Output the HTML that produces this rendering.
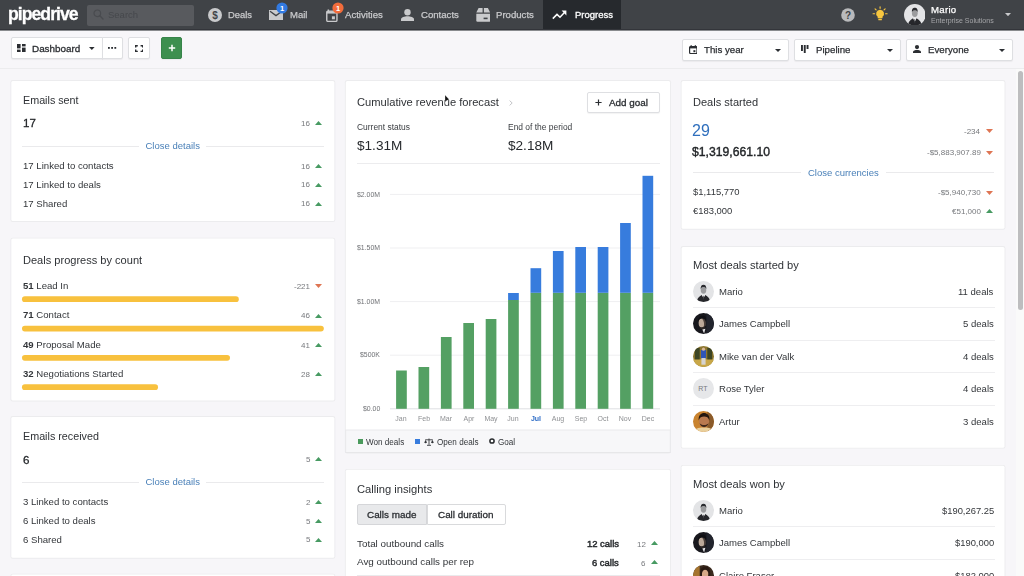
<!DOCTYPE html>
<html><head><meta charset="utf-8"><title>Pipedrive - Progress</title>
<style>
*{box-sizing:border-box;margin:0;padding:0}
html,body{width:1024px;height:576px;overflow:hidden}
body{position:relative;background:#f7f6f9;font-family:"Liberation Sans",sans-serif;color:#33363a}
.a{position:absolute;display:block}
.t{position:absolute;white-space:nowrap;line-height:1;will-change:transform}
.card{position:absolute;background:#fff;border:1px solid #efeff1;border-radius:2px}
.btn{position:absolute;background:#fff;border:1px solid #dedfe2;border-radius:2px;box-shadow:0 1px 1px rgba(0,0,0,.05)}
</style></head><body>

<svg class="a" style="left:0;top:0" width="1024" height="576" viewBox="0 0 1024 576"><rect x="10.40" y="80.00" width="324.90" height="142.00" rx="2.2" fill="#ececee"/><rect x="11.30" y="80.90" width="323.10" height="140.20" rx="1.5" fill="#fff"/><rect x="10.40" y="237.70" width="324.90" height="163.80" rx="2.2" fill="#ececee"/><rect x="11.30" y="238.60" width="323.10" height="162.00" rx="1.5" fill="#fff"/><rect x="10.40" y="416.10" width="324.90" height="142.60" rx="2.2" fill="#ececee"/><rect x="11.30" y="417.00" width="323.10" height="140.80" rx="1.5" fill="#fff"/><rect x="10.40" y="573.70" width="324.90" height="67.20" rx="2.2" fill="#ececee"/><rect x="11.30" y="574.60" width="323.10" height="65.40" rx="1.5" fill="#fff"/><rect x="344.90" y="80.00" width="326.10" height="373.50" rx="2.2" fill="#ececee"/><rect x="345.80" y="80.90" width="324.30" height="371.70" rx="1.5" fill="#fff"/><rect x="344.90" y="468.90" width="326.10" height="172.00" rx="2.2" fill="#ececee"/><rect x="345.80" y="469.80" width="324.30" height="170.20" rx="1.5" fill="#fff"/><rect x="680.70" y="80.00" width="324.70" height="149.70" rx="2.2" fill="#ececee"/><rect x="681.60" y="80.90" width="322.90" height="147.90" rx="1.5" fill="#fff"/><rect x="680.70" y="246.10" width="324.70" height="202.50" rx="2.2" fill="#ececee"/><rect x="681.60" y="247.00" width="322.90" height="200.70" rx="1.5" fill="#fff"/><rect x="680.70" y="464.90" width="324.70" height="176.00" rx="2.2" fill="#ececee"/><rect x="681.60" y="465.80" width="322.90" height="174.20" rx="1.5" fill="#fff"/><rect x="22" y="296.3" width="216.8" height="5.7" rx="2.85" fill="#f8c13e"/><rect x="22" y="325.7" width="301.8" height="5.7" rx="2.85" fill="#f8c13e"/><rect x="22" y="355" width="208" height="5.7" rx="2.85" fill="#f8c13e"/><rect x="22" y="384.3" width="136" height="5.7" rx="2.85" fill="#f8c13e"/></svg>
<div class="a" style="left:0px;top:0px;width:1024px;height:30px;background:#404347;border-bottom:1px solid #33353a;"></div>
<div class="a" style="left:0px;top:30px;width:1024px;height:1px;background:#898b8e;"></div>
<div class="t" style="left:8px;top:6px;font-size:17.6px;color:#fff;font-weight:bold;letter-spacing:-.95px;-webkit-text-stroke:.3px #fff;">pipedrive</div>
<div class="a" style="left:87px;top:4.5px;width:107px;height:21px;background:#585a5e;border-radius:2px;"></div>
<svg class="a" style="left:93px;top:9px" width="11" height="11" viewBox="0 0 11 11"><circle cx="4.3" cy="4.3" r="3.3" fill="none" stroke="#494b4f" stroke-width="1.2"/><path d="M6.8 6.8L10 10" stroke="#494b4f" stroke-width="1.4" stroke-linecap="round"/></svg>
<div class="t" style="left:108px;top:10px;font-size:9.5px;color:#46484c;">Search</div>
<svg class="a" style="left:208px;top:8px" width="14" height="14" viewBox="0 0 14 14"><circle cx="7" cy="7" r="7" fill="#c9cacc"/><text x="7" y="10.6" font-size="10" font-weight="bold" text-anchor="middle" fill="#404347" font-family='"Liberation Sans",sans-serif'>$</text></svg>
<div class="t" style="left:228.3px;top:10px;font-size:9.4px;color:#c9cacc;-webkit-text-stroke:.25px #c9cacc;">Deals</div>
<svg class="a" style="left:269px;top:10px" width="14" height="10" viewBox="0 0 14 10"><path d="M0 0H14V10H0Z" fill="#c9cacc"/><path d="M1 1.2L7 5.6L13 1.2" fill="none" stroke="#404347" stroke-width="1.3"/></svg>
<svg class="a" style="left:276px;top:2px" width="12" height="12" viewBox="0 0 12 12"><circle cx="6" cy="6" r="5.6" fill="#317ae2"/><text x="6" y="8.7" font-size="7.5" font-weight="bold" text-anchor="middle" fill="#fff" font-family='"Liberation Sans",sans-serif'>1</text></svg>
<div class="t" style="left:289.8px;top:10px;font-size:9.5px;color:#c9cacc;-webkit-text-stroke:.25px #c9cacc;">Mail</div>
<svg class="a" style="left:325.6px;top:8.7px" width="12.2" height="13.1" viewBox="0 0 13 14"><path d="M2.5 0.5V3M9.5 0.5V3" stroke="#c9cacc" stroke-width="1.6"/><rect x="0.8" y="2.3" width="10.9" height="10.9" rx="1.3" fill="none" stroke="#c9cacc" stroke-width="1.5"/><rect x="0.8" y="2.3" width="10.9" height="2.6" fill="#c9cacc"/><rect x="6.3" y="7.8" width="3.2" height="3.2" fill="#c9cacc"/></svg>
<svg class="a" style="left:331.5px;top:2px" width="12" height="12" viewBox="0 0 12 12"><circle cx="6" cy="6" r="5.6" fill="#f26c3b"/><text x="6" y="8.7" font-size="7.5" font-weight="bold" text-anchor="middle" fill="#fff" font-family='"Liberation Sans",sans-serif'>1</text></svg>
<div class="t" style="left:345px;top:10px;font-size:9.6px;color:#c9cacc;-webkit-text-stroke:.25px #c9cacc;">Activities</div>
<svg class="a" style="left:401px;top:9px" width="13" height="12" viewBox="0 0 13 12"><circle cx="6.5" cy="3.2" r="3.2" fill="#c9cacc"/><path d="M0 12V10.4C0 8 3.5 7.2 6.5 7.2S13 8 13 10.4V12Z" fill="#c9cacc"/></svg>
<div class="t" style="left:421px;top:10px;font-size:9.6px;color:#c9cacc;-webkit-text-stroke:.25px #c9cacc;">Contacts</div>
<svg class="a" style="left:475.5px;top:8px" width="14.5" height="14" viewBox="0 0 14.5 14"><path d="M2.6 0H6.6V4.6H0.3Z M7.9 0H11.9L14.2 4.6H7.9Z" fill="#c9cacc"/><path d="M0.3 5.8H14.2V12.6Q14.2 13.8 13 13.8H1.5Q0.3 13.8 0.3 12.6Z" fill="#c9cacc"/><rect x="7.6" y="9.6" width="4" height="1.6" fill="#404347"/></svg>
<div class="t" style="left:496.3px;top:10px;font-size:9.6px;color:#c9cacc;-webkit-text-stroke:.25px #c9cacc;">Products</div>
<div class="a" style="left:543px;top:0px;width:78px;height:29px;background:#26292d;"></div>
<svg class="a" style="left:551.5px;top:10px" width="15" height="10" viewBox="0 0 15 10"><path d="M0.8 8.6L5 4.4L8 7.2L13.4 1.6" fill="none" stroke="#fff" stroke-width="1.5"/><path d="M9.6 0.6H14.4V5.4Z" fill="#fff"/></svg>
<div class="t" style="left:574.5px;top:10px;font-size:9.5px;color:#fff;-webkit-text-stroke:.3px #fff;">Progress</div>
<svg class="a" style="left:841px;top:8px" width="14" height="14" viewBox="0 0 14 14"><circle cx="7" cy="7" r="6.8" fill="#b9babc"/><text x="7" y="10.6" font-size="10" font-weight="bold" text-anchor="middle" fill="#404347" font-family='"Liberation Sans",sans-serif'>?</text></svg>
<svg class="a" style="left:872px;top:6px" width="16.2" height="16.2" viewBox="0 0 18 18"><path d="M9 4.2A4.3 4.3 0 0 0 6.3 11.9V13.6H11.7V11.9A4.3 4.3 0 0 0 9 4.2Z" fill="#f8c73f"/><rect x="7" y="14.2" width="4" height="1.6" rx=".6" fill="#f8c73f"/><path d="M9 0.8V2.6M3.4 3.2L4.6 4.4M14.6 3.2L13.4 4.4M1.2 8.6H2.9M16.8 8.6H15.1" stroke="#f8c73f" stroke-width="1.3" stroke-linecap="round"/></svg>
<svg class="a" style="left:903.7px;top:3.8999999999999986px" width="21.6" height="21.6" viewBox="0 0 22 22"><defs><clipPath id="c91414"><circle cx="11" cy="11" r="11"/></clipPath></defs><g clip-path="url(#c91414)"><rect width="22" height="22" fill="#e3e4e6"/><path d="M4.2 22C4.4 18.4 5.6 16.8 9.2 14.6L11 17.8L12.8 14.6C16.4 16.8 17.6 18.4 17.8 22Z" fill="#26272b"/><path d="M9.5 14.4L11 17.9L12.5 14.4Z" fill="#f1f1f2"/><path d="M10.7 15.4H11.3L11.6 19H10.4Z" fill="#3a3b40"/><ellipse cx="11" cy="9.4" rx="2.9" ry="3.9" fill="#9b9c9e"/><path d="M8.1 8.6C7.7 5.2 9.2 3.9 11 3.9S14.3 5.2 13.9 8.6C13.4 6.9 12.5 6.4 11 6.4S8.6 6.9 8.1 8.6Z" fill="#2a2b2f"/></g></svg>
<div class="t" style="left:931px;top:5px;font-size:9.6px;color:#fff;-webkit-text-stroke:.25px #fff;letter-spacing:.3px;">Mario</div>
<div class="t" style="left:931px;top:17px;font-size:7px;color:#a5a6a9;">Enterprise Solutions</div>
<svg class="a" style="left:1004.5px;top:13.2px" width="6" height="3.2" viewBox="0 0 6 3.2"><path d="M0 0L6 0L3.0 3.2Z" fill="#c9cacc"/></svg>
<div class="a" style="left:0px;top:68px;width:1024px;height:1px;background:#ececee;"></div>
<div class="btn" style="left:11px;top:37px;width:92px;height:22px;border-radius:2px 0 0 2px"></div>
<div class="btn" style="left:102px;top:37px;width:21px;height:22px;border-radius:0 2px 2px 0"></div>
<svg class="a" style="left:17px;top:44px" width="9" height="8" viewBox="0 0 9 8"><rect x="0" y="0" width="3.6" height="4.4" fill="#2b2e32"/><rect x="0" y="5.6" width="3.6" height="2.4" fill="#2b2e32"/><rect x="5" y="0" width="3.6" height="2.4" fill="#2b2e32"/><rect x="5" y="3.6" width="3.6" height="4.4" fill="#2b2e32"/></svg>
<div class="t" style="left:32.3px;top:44px;font-size:9.9px;color:#2b2e32;-webkit-text-stroke:.3px #2b2e32;">Dashboard</div>
<svg class="a" style="left:89px;top:46.8px" width="5.6" height="3" viewBox="0 0 5.6 3"><path d="M0 0L5.6 0L2.8 3Z" fill="#2b2e32"/></svg>
<svg class="a" style="left:108px;top:47px" width="9" height="2" viewBox="0 0 9 2"><rect x="0" y="0" width="1.8" height="1.8" fill="#2b2e32"/><rect x="3.2" y="0" width="1.8" height="1.8" fill="#2b2e32"/><rect x="6.4" y="0" width="1.8" height="1.8" fill="#2b2e32"/></svg>
<div class="btn" style="left:128px;top:37px;width:21.5px;height:22px"></div>
<svg class="a" style="left:134.6px;top:44.5px" width="8.4" height="7.2" viewBox="0 0 8.4 7.2"><path d="M0.7 2.6V0.7H2.8M5.6 0.7H7.7V2.6M7.7 4.6V6.5H5.6M2.8 6.5H0.7V4.6" fill="none" stroke="#2b2e32" stroke-width="1.4"/></svg>
<div class="btn" style="left:160.5px;top:37px;width:21.5px;height:22px;background:#3d8f4f;border-color:#37844a"></div>
<svg class="a" style="left:167.5px;top:44px" width="8" height="8" viewBox="0 0 8 8"><path d="M4 0.8V7.2M0.8 4H7.2" stroke="#fff" stroke-width="1.5"/></svg>
<div class="btn" style="left:682px;top:39px;width:107px;height:21.5px"></div>
<svg class="a" style="left:688.6px;top:45px" width="8.6" height="9.2" viewBox="0 0 8.6 9.2"><path d="M2.2 0.2V2M6.4 0.2V2" stroke="#2b2e32" stroke-width="1.3"/><rect x="0.6" y="1.6" width="7.4" height="7" rx="1" fill="none" stroke="#2b2e32" stroke-width="1.2"/><rect x="0.6" y="1.6" width="7.4" height="1.8" fill="#2b2e32"/><rect x="4.4" y="5.2" width="2" height="2" fill="#2b2e32"/></svg>
<div class="t" style="left:704px;top:45px;font-size:9.7px;color:#2b2e32;-webkit-text-stroke:.25px #2b2e32;">This year</div>
<svg class="a" style="left:775.2px;top:48.6px" width="6" height="3" viewBox="0 0 6 3"><path d="M0 0L6 0L3.0 3Z" fill="#2b2e32"/></svg>
<div class="btn" style="left:794px;top:39px;width:107px;height:21.5px"></div>
<svg class="a" style="left:801px;top:45.4px" width="7.6" height="8" viewBox="0 0 7.6 8"><rect x="0" y="0" width="1.9" height="6" fill="#2b2e32"/><rect x="2.8" y="0" width="1.9" height="8" fill="#2b2e32"/><rect x="5.6" y="0" width="1.9" height="4" fill="#2b2e32"/></svg>
<div class="t" style="left:816px;top:45px;font-size:9.7px;color:#2b2e32;-webkit-text-stroke:.25px #2b2e32;">Pipeline</div>
<svg class="a" style="left:887.2px;top:48.6px" width="6" height="3" viewBox="0 0 6 3"><path d="M0 0L6 0L3.0 3Z" fill="#2b2e32"/></svg>
<div class="btn" style="left:906px;top:39px;width:107px;height:21.5px"></div>
<svg class="a" style="left:913px;top:45.4px" width="8" height="8" viewBox="0 0 8 8"><circle cx="4" cy="2.1" r="2.1" fill="#2b2e32"/><path d="M0 8V7C0 5.4 2.2 4.9 4 4.9S8 5.4 8 7V8Z" fill="#2b2e32"/></svg>
<div class="t" style="left:928px;top:45px;font-size:9.7px;color:#2b2e32;-webkit-text-stroke:.25px #2b2e32;">Everyone</div>
<svg class="a" style="left:999.2px;top:48.6px" width="6" height="3" viewBox="0 0 6 3"><path d="M0 0L6 0L3.0 3Z" fill="#2b2e32"/></svg>
<div class="t" style="left:22.5px;top:95px;font-size:10.75px;color:#2f3236;">Emails sent</div>
<div class="t" style="left:22.5px;top:117px;font-size:11.6px;color:#222528;-webkit-text-stroke:.28px #222528;">17</div>
<div class="t" style="right:714px;top:120px;font-size:8px;color:#77797d;">16</div>
<svg class="a" style="left:315px;top:120.8px" width="7" height="4" viewBox="0 0 7 4"><path d="M0 4L3.5 0L7 4Z" fill="#479a62"/></svg>
<div class="a" style="left:22px;top:145.5px;width:302px;height:1px;background:#eaeaec;"></div>
<div class="t" style="left:139px;top:141px;font-size:9.5px;color:#4a80b8;background:#fff;padding:0 6.5px">Close details</div>
<div class="t" style="left:22.5px;top:161px;font-size:9.6px;color:#33363a;">17 Linked to contacts</div>
<div class="t" style="right:714px;top:163px;font-size:8px;color:#77797d;">16</div>
<svg class="a" style="left:315px;top:164.2px" width="7" height="4" viewBox="0 0 7 4"><path d="M0 4L3.5 0L7 4Z" fill="#479a62"/></svg>
<div class="t" style="left:22.5px;top:180px;font-size:9.6px;color:#33363a;">17 Linked to deals</div>
<div class="t" style="right:714px;top:181px;font-size:8px;color:#77797d;">16</div>
<svg class="a" style="left:315px;top:182.95px" width="7" height="4" viewBox="0 0 7 4"><path d="M0 4L3.5 0L7 4Z" fill="#479a62"/></svg>
<div class="t" style="left:22.5px;top:199px;font-size:9.6px;color:#33363a;">17 Shared</div>
<div class="t" style="right:714px;top:200px;font-size:8px;color:#77797d;">16</div>
<svg class="a" style="left:315px;top:201.7px" width="7" height="4" viewBox="0 0 7 4"><path d="M0 4L3.5 0L7 4Z" fill="#479a62"/></svg>
<div class="t" style="left:22.5px;top:255px;font-size:11.05px;color:#2f3236;">Deals progress by count</div>
<div class="t" style="left:22.5px;top:281px;font-size:9.6px;color:#33363a;"><b>51</b> Lead In</div>
<div class="t" style="right:714px;top:283px;font-size:8px;color:#77797d;">-221</div>
<svg class="a" style="left:315px;top:284.2px" width="7" height="4" viewBox="0 0 7 4"><path d="M0 0L7 0L3.5 4Z" fill="#de7553"/></svg>
<div class="t" style="left:22.5px;top:310px;font-size:9.6px;color:#33363a;"><b>71</b> Contact</div>
<div class="t" style="right:714px;top:312px;font-size:8px;color:#77797d;">46</div>
<svg class="a" style="left:315px;top:313.59999999999997px" width="7" height="4" viewBox="0 0 7 4"><path d="M0 4L3.5 0L7 4Z" fill="#479a62"/></svg>
<div class="t" style="left:22.5px;top:340px;font-size:9.6px;color:#33363a;"><b>49</b> Proposal Made</div>
<div class="t" style="right:714px;top:342px;font-size:8px;color:#77797d;">41</div>
<svg class="a" style="left:315px;top:343.0px" width="7" height="4" viewBox="0 0 7 4"><path d="M0 4L3.5 0L7 4Z" fill="#479a62"/></svg>
<div class="t" style="left:22.5px;top:369px;font-size:9.6px;color:#33363a;"><b>32</b> Negotiations Started</div>
<div class="t" style="right:714px;top:371px;font-size:8px;color:#77797d;">28</div>
<svg class="a" style="left:315px;top:372.4px" width="7" height="4" viewBox="0 0 7 4"><path d="M0 4L3.5 0L7 4Z" fill="#479a62"/></svg>
<div class="t" style="left:22.5px;top:431px;font-size:10.75px;color:#2f3236;">Emails received</div>
<div class="t" style="left:22.5px;top:454px;font-size:11.6px;color:#222528;-webkit-text-stroke:.28px #222528;">6</div>
<div class="t" style="right:714px;top:456px;font-size:8px;color:#77797d;">5</div>
<svg class="a" style="left:315px;top:457px" width="7" height="4" viewBox="0 0 7 4"><path d="M0 4L3.5 0L7 4Z" fill="#479a62"/></svg>
<div class="a" style="left:22px;top:481.7px;width:302px;height:1px;background:#eaeaec;"></div>
<div class="t" style="left:139px;top:477px;font-size:9.5px;color:#4a80b8;background:#fff;padding:0 6.5px">Close details</div>
<div class="t" style="left:22.5px;top:497px;font-size:9.6px;color:#33363a;">3 Linked to contacts</div>
<div class="t" style="right:714px;top:499px;font-size:8px;color:#77797d;">2</div>
<svg class="a" style="left:315px;top:500.4px" width="7" height="4" viewBox="0 0 7 4"><path d="M0 4L3.5 0L7 4Z" fill="#479a62"/></svg>
<div class="t" style="left:22.5px;top:516px;font-size:9.6px;color:#33363a;">6 Linked to deals</div>
<div class="t" style="right:714px;top:518px;font-size:8px;color:#77797d;">5</div>
<svg class="a" style="left:315px;top:519.1500000000001px" width="7" height="4" viewBox="0 0 7 4"><path d="M0 4L3.5 0L7 4Z" fill="#479a62"/></svg>
<div class="t" style="left:22.5px;top:535px;font-size:9.6px;color:#33363a;">6 Shared</div>
<div class="t" style="right:714px;top:536px;font-size:8px;color:#77797d;">5</div>
<svg class="a" style="left:315px;top:537.9000000000001px" width="7" height="4" viewBox="0 0 7 4"><path d="M0 4L3.5 0L7 4Z" fill="#479a62"/></svg>
<div class="t" style="left:357px;top:97px;font-size:11.15px;color:#2f3236;">Cumulative revenue forecast</div>
<svg class="a" style="left:508.5px;top:99.5px" width="4" height="6" viewBox="0 0 4 6"><path d="M0.6 0.6L3.2 3L0.6 5.4" fill="none" stroke="#c4c5c8" stroke-width="1"/></svg>
<div class="btn" style="left:587px;top:92px;width:72.5px;height:20.5px"></div>
<svg class="a" style="left:594.5px;top:98.6px" width="7" height="7" viewBox="0 0 7 7"><path d="M3.5 0.4V6.6M0.4 3.5H6.6" stroke="#2b2e32" stroke-width="1.2"/></svg>
<div class="t" style="left:608.8px;top:98px;font-size:9.9px;color:#2b2e32;-webkit-text-stroke:.3px #2b2e32;">Add goal</div>
<div class="t" style="left:357px;top:123px;font-size:8.45px;color:#3a3d41;">Current status</div>
<div class="t" style="left:508.3px;top:123px;font-size:8.45px;color:#3a3d41;">End of the period</div>
<div class="t" style="left:356.5px;top:139px;font-size:13.6px;color:#26292c;">$1.31M</div>
<div class="t" style="left:507.8px;top:139px;font-size:13.6px;color:#26292c;">$2.18M</div>
<div class="a" style="left:357px;top:163px;width:303px;height:1px;background:#ececee;"></div>
<div class="t" style="right:643.7px;top:192px;font-size:6.9px;color:#6f7175;">$2.00M</div>
<div class="t" style="right:643.7px;top:245px;font-size:6.9px;color:#6f7175;">$1.50M</div>
<div class="t" style="right:643.7px;top:299px;font-size:6.9px;color:#6f7175;">$1.00M</div>
<div class="t" style="right:643.7px;top:352px;font-size:6.9px;color:#6f7175;">$500K</div>
<div class="t" style="right:643.7px;top:406px;font-size:6.9px;color:#6f7175;">$0.00</div>
<div class="t" style="left:386.45px;width:30px;text-align:center;top:415px;font-size:7px;color:#8e9093">Jan</div>
<div class="t" style="left:408.85px;width:30px;text-align:center;top:415px;font-size:7px;color:#8e9093">Feb</div>
<div class="t" style="left:431.25px;width:30px;text-align:center;top:415px;font-size:7px;color:#8e9093">Mar</div>
<div class="t" style="left:453.65px;width:30px;text-align:center;top:415px;font-size:7px;color:#8e9093">Apr</div>
<div class="t" style="left:476.05px;width:30px;text-align:center;top:415px;font-size:7px;color:#8e9093">May</div>
<div class="t" style="left:498.45px;width:30px;text-align:center;top:415px;font-size:7px;color:#8e9093">Jun</div>
<div class="t" style="left:520.85px;width:30px;text-align:center;top:415px;font-size:7px;color:#2b6bc6;font-weight:bold">Jul</div>
<div class="t" style="left:543.25px;width:30px;text-align:center;top:415px;font-size:7px;color:#8e9093">Aug</div>
<div class="t" style="left:565.65px;width:30px;text-align:center;top:415px;font-size:7px;color:#8e9093">Sep</div>
<div class="t" style="left:588.05px;width:30px;text-align:center;top:415px;font-size:7px;color:#8e9093">Oct</div>
<div class="t" style="left:610.45px;width:30px;text-align:center;top:415px;font-size:7px;color:#8e9093">Nov</div>
<div class="t" style="left:632.85px;width:30px;text-align:center;top:415px;font-size:7px;color:#8e9093">Dec</div>
<svg class="a" style="left:346px;top:170px" width="324" height="245" viewBox="0 0 324 245"><rect x="44" y="23.90" width="270" height="1" fill="#efeff1"/><rect x="44" y="77.50" width="270" height="1" fill="#efeff1"/><rect x="44" y="131.10" width="270" height="1" fill="#efeff1"/><rect x="44" y="184.70" width="270" height="1" fill="#efeff1"/><rect x="44" y="238.30" width="270" height="1" fill="#dfe0e3"/><rect x="50.10" y="200.50" width="10.7" height="38.30" fill="#54a063"/><rect x="72.50" y="197.00" width="10.7" height="41.80" fill="#54a063"/><rect x="94.90" y="167.00" width="10.7" height="71.80" fill="#54a063"/><rect x="117.30" y="153.00" width="10.7" height="85.80" fill="#54a063"/><rect x="139.70" y="149.00" width="10.7" height="89.80" fill="#54a063"/><rect x="162.10" y="130.00" width="10.7" height="108.80" fill="#54a063"/><rect x="162.10" y="123.00" width="10.7" height="7.00" fill="#377cdd"/><rect x="184.50" y="122.80" width="10.7" height="116.00" fill="#54a063"/><rect x="184.50" y="98.20" width="10.7" height="24.60" fill="#377cdd"/><rect x="206.90" y="122.80" width="10.7" height="116.00" fill="#54a063"/><rect x="206.90" y="81.00" width="10.7" height="41.80" fill="#377cdd"/><rect x="229.30" y="122.80" width="10.7" height="116.00" fill="#54a063"/><rect x="229.30" y="77.00" width="10.7" height="45.80" fill="#377cdd"/><rect x="251.70" y="122.80" width="10.7" height="116.00" fill="#54a063"/><rect x="251.70" y="77.00" width="10.7" height="45.80" fill="#377cdd"/><rect x="274.10" y="122.80" width="10.7" height="116.00" fill="#54a063"/><rect x="274.10" y="53.00" width="10.7" height="69.80" fill="#377cdd"/><rect x="296.50" y="122.80" width="10.7" height="116.00" fill="#54a063"/><rect x="296.50" y="5.80" width="10.7" height="117.00" fill="#377cdd"/></svg>
<svg class="a" style="left:344px;top:428px" width="328" height="27" viewBox="0 0 328 27"><rect x="1.8" y="1.6" width="324.3" height="23" fill="#f7f7f9"/><rect x="1.3" y="1.6" width="325.3" height="0.9" fill="#e9e9eb"/><rect x="1.3" y="24.1" width="325.3" height="0.9" fill="#e6e6e8"/><rect x="1.2" y="1.6" width="0.9" height="23.4" fill="#e9e9eb"/><rect x="325.8" y="1.6" width="0.9" height="23.4" fill="#e9e9eb"/></svg>
<div class="a" style="left:358px;top:439px;width:5px;height:5px;background:#4a9a5c;"></div>
<div class="t" style="left:365.8px;top:439px;font-size:8.15px;color:#33363a;">Won deals</div>
<div class="a" style="left:415.2px;top:439px;width:5px;height:5px;background:#377cdd;"></div>
<svg class="a" style="left:423.5px;top:437.5px" width="10" height="8" viewBox="0 0 10 8"><path d="M5 0.5V6.8M1.2 1.8H8.8M3 7.3H7" stroke="#33363a" stroke-width="0.9" fill="none"/><path d="M0.2 4.6L1.6 2L3 4.6Q1.6 6 0.2 4.6Z M7 4.6L8.4 2L9.8 4.6Q8.4 6 7 4.6Z" fill="#33363a"/></svg>
<div class="t" style="left:437px;top:439px;font-size:8.15px;color:#33363a;">Open deals</div>
<svg class="a" style="left:489.3px;top:438.2px" width="6" height="6" viewBox="0 0 6 6"><circle cx="3" cy="3" r="2.1" fill="#fff" stroke="#26292c" stroke-width="1.5"/></svg>
<div class="t" style="left:498px;top:439px;font-size:8.15px;color:#33363a;">Goal</div>
<div class="t" style="left:357px;top:484px;font-size:11.2px;color:#2f3236;">Calling insights</div>
<div class="a" style="left:357px;top:503.7px;width:70px;height:21px;background:#e8e9eb;border:1px solid #d5d6d9;border-radius:2px 0 0 2px"></div>
<div class="a" style="left:426.5px;top:503.7px;width:79.5px;height:21px;background:#fff;border:1px solid #d9dadc;border-radius:0 2px 2px 0"></div>
<div class="t" style="left:367.3px;top:510px;font-size:9.9px;color:#2b2e32;-webkit-text-stroke:.3px #2b2e32;">Calls made</div>
<div class="t" style="left:438px;top:510px;font-size:9.9px;color:#2b2e32;-webkit-text-stroke:.3px #2b2e32;">Call duration</div>
<div class="t" style="left:357px;top:539px;font-size:9.85px;color:#33363a;">Total outbound calls</div>
<div class="t" style="left:357px;top:557px;font-size:9.85px;color:#33363a;">Avg outbound calls per rep</div>
<div class="t" style="right:405.20000000000005px;top:539px;font-size:9.45px;color:#26292c;-webkit-text-stroke:.45px #26292c;">12 calls</div>
<div class="t" style="right:405.20000000000005px;top:558px;font-size:9.45px;color:#26292c;-webkit-text-stroke:.45px #26292c;">6 calls</div>
<div class="t" style="right:378.5px;top:541px;font-size:8px;color:#77797d;">12</div>
<svg class="a" style="left:650.7px;top:541.2px" width="7" height="4" viewBox="0 0 7 4"><path d="M0 4L3.5 0L7 4Z" fill="#479a62"/></svg>
<div class="t" style="right:378.5px;top:560px;font-size:8px;color:#77797d;">6</div>
<svg class="a" style="left:650.7px;top:560px" width="7" height="4" viewBox="0 0 7 4"><path d="M0 4L3.5 0L7 4Z" fill="#479a62"/></svg>
<div class="a" style="left:357px;top:575px;width:303px;height:1px;background:#eaeaec;"></div>
<div class="t" style="left:692.7px;top:97px;font-size:11.05px;color:#2f3236;">Deals started</div>
<div class="t" style="left:692.3px;top:123px;font-size:16px;color:#2f6fbd;">29</div>
<div class="t" style="right:43.5px;top:128px;font-size:8px;color:#77797d;">-234</div>
<svg class="a" style="left:985.5px;top:129.2px" width="7" height="4" viewBox="0 0 7 4"><path d="M0 0L7 0L3.5 4Z" fill="#de7553"/></svg>
<div class="t" style="left:692.3px;top:146px;font-size:12.2px;color:#222528;-webkit-text-stroke:.38px #222528;">$1,319,661.10</div>
<div class="t" style="right:43.5px;top:149px;font-size:8px;color:#77797d;">-$5,883,907.89</div>
<svg class="a" style="left:985.5px;top:150.6px" width="7" height="4" viewBox="0 0 7 4"><path d="M0 0L7 0L3.5 4Z" fill="#de7553"/></svg>
<div class="a" style="left:692.5px;top:172.3px;width:301.5px;height:1px;background:#eaeaec;"></div>
<div class="t" style="left:801px;top:168px;font-size:9.5px;color:#4a80b8;background:#fff;padding:0 7px">Close currencies</div>
<div class="t" style="left:692.7px;top:187px;font-size:9.45px;color:#33363a;">$1,115,770</div>
<div class="t" style="right:43.5px;top:189px;font-size:8px;color:#77797d;">-$5,940,730</div>
<svg class="a" style="left:985.5px;top:190.6px" width="7" height="4" viewBox="0 0 7 4"><path d="M0 0L7 0L3.5 4Z" fill="#de7553"/></svg>
<div class="t" style="left:692.7px;top:206px;font-size:9.45px;color:#33363a;">€183,000</div>
<div class="t" style="right:43.5px;top:208px;font-size:8px;color:#77797d;">€51,000</div>
<svg class="a" style="left:985.5px;top:208.8px" width="7" height="4" viewBox="0 0 7 4"><path d="M0 4L3.5 0L7 4Z" fill="#479a62"/></svg>
<div class="t" style="left:692.7px;top:260px;font-size:11.15px;color:#2f3236;">Most deals started by</div>
<svg class="a" style="left:692.5px;top:280.8px" width="21.0" height="21.0" viewBox="0 0 22 22"><defs><clipPath id="c703291"><circle cx="11" cy="11" r="11"/></clipPath></defs><g clip-path="url(#c703291)"><rect width="22" height="22" fill="#e3e4e6"/><path d="M4.2 22C4.4 18.4 5.6 16.8 9.2 14.6L11 17.8L12.8 14.6C16.4 16.8 17.6 18.4 17.8 22Z" fill="#26272b"/><path d="M9.5 14.4L11 17.9L12.5 14.4Z" fill="#f1f1f2"/><path d="M10.7 15.4H11.3L11.6 19H10.4Z" fill="#3a3b40"/><ellipse cx="11" cy="9.4" rx="2.9" ry="3.9" fill="#9b9c9e"/><path d="M8.1 8.6C7.7 5.2 9.2 3.9 11 3.9S14.3 5.2 13.9 8.6C13.4 6.9 12.5 6.4 11 6.4S8.6 6.9 8.1 8.6Z" fill="#2a2b2f"/></g></svg>
<div class="t" style="left:719.3px;top:287px;font-size:9.55px;color:#33363a;">Mario</div>
<div class="t" style="right:30.200000000000045px;top:287px;font-size:9.55px;color:#33363a;">11 deals</div>
<div class="a" style="left:692.5px;top:307.1px;width:302.5px;height:1px;background:#eeeef0;"></div>
<svg class="a" style="left:692.5px;top:313.35px" width="21.0" height="21.0" viewBox="0 0 22 22"><defs><clipPath id="j323"><circle cx="11" cy="11" r="11"/></clipPath></defs><g clip-path="url(#j323)"><rect width="22" height="22" fill="#18181d"/><rect x="14" width="8" height="22" fill="#22242d"/><ellipse cx="9.2" cy="10.4" rx="3.3" ry="4.8" fill="#bca999"/><path d="M9.6 6C11.6 8 12.2 12 11 15.2L13.4 13C14 9 13 6.4 11.4 5Z" fill="#4a3f3a"/><path d="M5.2 9.6C4.8 4.6 7.4 2.8 10 2.8S14.6 4.4 13.6 9C12.6 6.4 11 5.8 9.4 5.8S6.2 6.6 5.2 9.6Z" fill="#101014"/><path d="M6.4 13C7.4 15.6 10.6 16 12.2 13.4V16.4L10 17.6L7.2 16Z" fill="#2e2826"/><path d="M9.8 17.2L11.6 21.5L13 16.6Z" fill="#e4e4e7"/></g></svg>
<div class="t" style="left:719.3px;top:319px;font-size:9.55px;color:#33363a;">James Campbell</div>
<div class="t" style="right:30.200000000000045px;top:319px;font-size:9.55px;color:#33363a;">5 deals</div>
<div class="a" style="left:692.5px;top:339.7px;width:302.5px;height:1px;background:#eeeef0;"></div>
<svg class="a" style="left:692.5px;top:345.9px" width="21.0" height="21.0" viewBox="0 0 22 22"><defs><clipPath id="k356"><circle cx="11" cy="11" r="11"/></clipPath></defs><g clip-path="url(#k356)"><rect width="22" height="22" fill="#8d772f"/><rect y="14" width="22" height="8" fill="#c8a748"/><rect x="2" y="2" width="5" height="12" fill="#3d4524"/><rect x="15" y="2" width="5" height="12" fill="#3d4524"/><rect x="8.4" y="4.2" width="5.2" height="9" fill="#2f55b8"/><rect x="8.8" y="12.6" width="4.4" height="7" fill="#d6d3cf"/><circle cx="11" cy="3.4" r="1.7" fill="#d9b79a"/></g></svg>
<div class="t" style="left:719.3px;top:352px;font-size:9.55px;color:#33363a;">Mike van der Valk</div>
<div class="t" style="right:30.200000000000045px;top:352px;font-size:9.55px;color:#33363a;">4 deals</div>
<div class="a" style="left:692.5px;top:372.2px;width:302.5px;height:1px;background:#eeeef0;"></div>
<div class="a" style="left:692.5px;top:378.45px;width:21.0px;height:21.0px;border-radius:50%;background:#e6e7e9;color:#77797d;font-size:7px;line-height:21.0px;text-align:center;letter-spacing:.2px">RT</div>
<div class="t" style="left:719.3px;top:384px;font-size:9.55px;color:#33363a;">Rose Tyler</div>
<div class="t" style="right:30.200000000000045px;top:384px;font-size:9.55px;color:#33363a;">4 deals</div>
<div class="a" style="left:692.5px;top:404.8px;width:302.5px;height:1px;background:#eeeef0;"></div>
<svg class="a" style="left:692.5px;top:411.0px" width="21.0" height="21.0" viewBox="0 0 22 22"><defs><clipPath id="r421"><circle cx="11" cy="11" r="11"/></clipPath></defs><g clip-path="url(#r421)"><rect width="22" height="22" fill="#c9832f"/><rect x="15" width="7" height="22" fill="#8a5a2a"/><path d="M1 22C2 18.6 5 17.4 11.4 17.4S20 18.6 21 22Z" fill="#e9cf9c"/><ellipse cx="11.6" cy="11" rx="5.2" ry="6.4" fill="#b9794f"/><path d="M6 10C5.4 4.2 8.6 2 11.6 2S17.8 4.2 17.2 10C16.2 6.6 14.4 5.8 11.6 5.8S7 6.6 6 10Z" fill="#24160f"/><path d="M7 12.6C7.6 18.2 15.6 18.2 16.2 12.6C14.8 15.4 8.4 15.4 7 12.6Z" fill="#3f281b"/></g></svg>
<div class="t" style="left:719.3px;top:417px;font-size:9.55px;color:#33363a;">Artur</div>
<div class="t" style="right:30.200000000000045px;top:417px;font-size:9.55px;color:#33363a;">3 deals</div>
<div class="t" style="left:692.7px;top:479px;font-size:11.1px;color:#2f3236;">Most deals won by</div>
<svg class="a" style="left:692.5px;top:499.5px" width="21.0" height="21.0" viewBox="0 0 22 22"><defs><clipPath id="c703510"><circle cx="11" cy="11" r="11"/></clipPath></defs><g clip-path="url(#c703510)"><rect width="22" height="22" fill="#e3e4e6"/><path d="M4.2 22C4.4 18.4 5.6 16.8 9.2 14.6L11 17.8L12.8 14.6C16.4 16.8 17.6 18.4 17.8 22Z" fill="#26272b"/><path d="M9.5 14.4L11 17.9L12.5 14.4Z" fill="#f1f1f2"/><path d="M10.7 15.4H11.3L11.6 19H10.4Z" fill="#3a3b40"/><ellipse cx="11" cy="9.4" rx="2.9" ry="3.9" fill="#9b9c9e"/><path d="M8.1 8.6C7.7 5.2 9.2 3.9 11 3.9S14.3 5.2 13.9 8.6C13.4 6.9 12.5 6.4 11 6.4S8.6 6.9 8.1 8.6Z" fill="#2a2b2f"/></g></svg>
<div class="t" style="left:719.3px;top:506px;font-size:9.55px;color:#33363a;">Mario</div>
<div class="t" style="right:30.200000000000045px;top:506px;font-size:9.4px;color:#33363a;">$190,267.25</div>
<div class="a" style="left:692.5px;top:526.3px;width:302.5px;height:1px;background:#eeeef0;"></div>
<svg class="a" style="left:692.5px;top:532.05px" width="21.0" height="21.0" viewBox="0 0 22 22"><defs><clipPath id="j542"><circle cx="11" cy="11" r="11"/></clipPath></defs><g clip-path="url(#j542)"><rect width="22" height="22" fill="#18181d"/><rect x="14" width="8" height="22" fill="#22242d"/><ellipse cx="9.2" cy="10.4" rx="3.3" ry="4.8" fill="#bca999"/><path d="M9.6 6C11.6 8 12.2 12 11 15.2L13.4 13C14 9 13 6.4 11.4 5Z" fill="#4a3f3a"/><path d="M5.2 9.6C4.8 4.6 7.4 2.8 10 2.8S14.6 4.4 13.6 9C12.6 6.4 11 5.8 9.4 5.8S6.2 6.6 5.2 9.6Z" fill="#101014"/><path d="M6.4 13C7.4 15.6 10.6 16 12.2 13.4V16.4L10 17.6L7.2 16Z" fill="#2e2826"/><path d="M9.8 17.2L11.6 21.5L13 16.6Z" fill="#e4e4e7"/></g></svg>
<div class="t" style="left:719.3px;top:538px;font-size:9.55px;color:#33363a;">James Campbell</div>
<div class="t" style="right:30.200000000000045px;top:538px;font-size:9.4px;color:#33363a;">$190,000</div>
<div class="a" style="left:692.5px;top:558.8px;width:302.5px;height:1px;background:#eeeef0;"></div>
<svg class="a" style="left:692.5px;top:564.6px" width="21.0" height="21.0" viewBox="0 0 22 22"><defs><clipPath id="l575"><circle cx="11" cy="11" r="11"/></clipPath></defs><g clip-path="url(#l575)"><rect width="22" height="22" fill="#3a2a1e"/><rect x="0" y="0" width="7" height="22" fill="#a5742f"/><ellipse cx="12.6" cy="9" rx="4" ry="5" fill="#d7a988"/><path d="M7.6 22V8C7.6 3 10.4 1.6 13 1.6S18 3.4 18 8V22H16V8C15 5.6 14 5 12.6 5S9.6 6.4 9.4 9V22Z" fill="#2a1a12"/></g></svg>
<div class="t" style="left:719.3px;top:571px;font-size:9.55px;color:#33363a;">Claire Fraser</div>
<div class="t" style="right:30.200000000000045px;top:571px;font-size:9.4px;color:#33363a;">$182,000</div>
<svg class="a" style="left:444.4px;top:93.8px" width="7" height="10" viewBox="0 0 7 10"><path d="M1 1L1 8.2L2.8 6.6L5.2 5.6Z" fill="#111" stroke="#fff" stroke-width=".5" stroke-opacity=".6"/><path d="M1 8.2L1 10L3.4 9.2L2.8 6.6Z" fill="#fff" fill-opacity=".75"/></svg>
<div class="a" style="left:1016px;top:69px;width:8px;height:507px;background:#fafafa;"></div>
<div class="a" style="left:1018px;top:71px;width:5px;height:239px;background:#bdbdbf;border-radius:2.5px;"></div>
</body></html>
